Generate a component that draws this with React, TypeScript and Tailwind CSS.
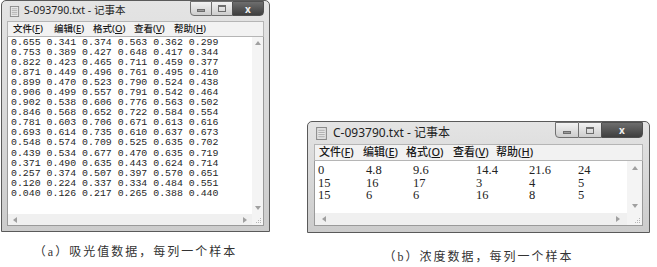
import React from "react";

const absorb = [
  "0.655 0.341 0.374 0.563 0.362 0.299",
  "0.753 0.389 0.427 0.648 0.417 0.344",
  "0.822 0.423 0.465 0.711 0.459 0.377",
  "0.871 0.449 0.496 0.761 0.495 0.410",
  "0.899 0.470 0.523 0.790 0.524 0.438",
  "0.906 0.499 0.557 0.791 0.542 0.464",
  "0.902 0.538 0.606 0.776 0.563 0.502",
  "0.846 0.568 0.652 0.722 0.584 0.554",
  "0.781 0.603 0.706 0.671 0.613 0.616",
  "0.693 0.614 0.735 0.610 0.637 0.673",
  "0.548 0.574 0.709 0.525 0.635 0.702",
  "0.439 0.534 0.677 0.470 0.635 0.719",
  "0.371 0.490 0.635 0.443 0.624 0.714",
  "0.257 0.374 0.507 0.397 0.570 0.651",
  "0.120 0.224 0.337 0.334 0.484 0.551",
  "0.040 0.126 0.217 0.265 0.388 0.440",
];

const conc = [
  ["0", "4.8", "9.6", "14.4", "21.6", "24"],
  ["15", "16", "17", "3", "4", "5"],
  ["15", "6", "6", "16", "8", "5"],
];

const menu = [
  ["文件(", "F", ")"],
  ["编辑(", "E", ")"],
  ["格式(", "O", ")"],
  ["查看(", "V", ")"],
  ["帮助(", "H", ")"],
];

const ui = { fontFamily: '"Noto Sans", "Noto Sans CJK SC", sans-serif' };

// little notepad page icon in the title bar
const FileIcon = ({ size }: { size: number }) => (
  <svg width={size} height={size} viewBox="0 0 12 12">
    <rect x="1.5" y="0.5" width="9" height="11" fill="#e8e8e8" stroke="#8a8a8a" />
    <line x1="3" y1="3" x2="9" y2="3" stroke="#b0b0b0" />
    <line x1="3" y1="5" x2="9" y2="5" stroke="#b0b0b0" />
    <line x1="3" y1="7" x2="9" y2="7" stroke="#b0b0b0" />
    <line x1="3" y1="9" x2="9" y2="9" stroke="#b0b0b0" />
  </svg>
);

const Buttons = ({ h, minW, maxW, closeW }: { h: string; minW: string; maxW: string; closeW: string }) => (
  <div className={`flex self-start ${h}`}>
    <div className={`${minW} h-full border border-[#707070] rounded-bl-[4px] bg-gradient-to-b from-[#f2f2f2] to-[#cdcdcd] flex items-center justify-center`}>
      <div className="w-[8px] h-[3px] bg-[#9a9a9a] border border-[#6d6d6d] mt-[4px]" />
    </div>
    <div className={`${maxW} h-full border-y border-[#707070] bg-gradient-to-b from-[#f2f2f2] to-[#cdcdcd] flex items-center justify-center`}>
      <div className="w-[8px] h-[7px] border border-[#6d6d6d] border-t-2" />
    </div>
    <div className={`${closeW} h-full border border-[#505050] rounded-br-[4px] bg-gradient-to-b from-[#6e6e6e] to-[#3f3f3f] flex items-center justify-center`}>
      <span className="text-[#eeeeee] text-[10px] font-bold leading-none" style={ui}>x</span>
    </div>
  </div>
);

const Menu = ({ cls, widths }: { cls: string; widths: number[] }) => (
  <div className={`flex items-center ${cls}`} style={ui}>
    {menu.map(([a, b, c], i) => (
      <span key={b} className="text-[#1a1a1a] font-medium" style={{ width: widths[i] }}>
        {a}
        <span className="underline">{b}</span>
        {c}
      </span>
    ))}
  </div>
);

const pts: Record<string, string> = {
  up: "0,5 3,1 6,5",
  down: "0,1 3,5 6,1",
  left: "5,0 1,3 5,6",
  right: "1,0 5,3 1,6",
};

const Arrow = ({ d }: { d: string }) => (
  <svg width="6" height="6" viewBox="0 0 6 6">
    <polygon points={pts[d]} fill="#a0a0a0" />
  </svg>
);

const Grip = () => (
  <svg width="7" height="7" viewBox="0 0 7 7">
    <rect x="5" y="1" width="1" height="1" fill="#b5b5b5" />
    <rect x="3" y="3" width="1" height="1" fill="#b5b5b5" />
    <rect x="5" y="3" width="1" height="1" fill="#b5b5b5" />
    <rect x="1" y="5" width="1" height="1" fill="#b5b5b5" />
    <rect x="3" y="5" width="1" height="1" fill="#b5b5b5" />
    <rect x="5" y="5" width="1" height="1" fill="#b5b5b5" />
  </svg>
);

const LeftPad = () => (
  <div className="w-[269px] h-[232px] border border-[#5a5a5a] rounded-t-[5px] bg-gradient-to-b from-[#e4e4e4] to-[#cccccc] flex flex-col px-[5px] pb-[5px]">
    <div className="h-[20px] flex items-center">
      <div className="flex items-center gap-[4px] pl-[2px] flex-1">
        <FileIcon size={11} />
        <span className="text-[10.5px] text-[#222]" style={ui}>S-093790.txt - 记事本</span>
      </div>
      <Buttons h="h-[15px]" minW="w-[22px]" maxW="w-[20px]" closeW="w-[32px]" />
    </div>
    <Menu cls="h-[16px] bg-[#f2f2f2] border border-[#b5b5b5] text-[9.5px] pl-[5px]" widths={[41, 39, 41, 40, 40]} />
    <div className="flex-1 flex bg-white border-x border-[#9a9a9a]">
      <div className="flex-1 pl-[3px] pt-[1px] text-[9.9px] leading-[10.05px] text-[#262626] whitespace-pre" style={{ fontFamily: '"Liberation Mono", monospace' }}>
        {absorb.map((r) => (
          <div key={r}>{r}</div>
        ))}
      </div>
      <div className="w-[11px] bg-[#f4f4f4] flex flex-col items-center justify-between py-[3px]">
        <Arrow d="up" />
        <Arrow d="down" />
      </div>
    </div>
    <div className="h-[12px] flex bg-white border-x border-b border-[#9a9a9a]">
      <div className="flex-1 bg-[#f0f0f0] flex items-center justify-between px-[4px]">
        <Arrow d="left" />
        <Arrow d="right" />
      </div>
      <div className="w-[11px] bg-[#f4f4f4] flex items-end justify-end p-[1px]">
        <Grip />
      </div>
    </div>
  </div>
);

const RightPad = () => (
  <div className="w-[343px] h-[112px] border border-[#5a5a5a] rounded-t-[5px] bg-gradient-to-b from-[#e4e4e4] to-[#cccccc] flex flex-col px-[6px] pb-[6px]">
    <div className="h-[22px] flex items-center">
      <div className="flex items-center gap-[5px] pl-[1px] flex-1">
        <FileIcon size={13} />
        <span className="text-[12px] text-[#222]" style={ui}>C-093790.txt - 记事本</span>
      </div>
      <Buttons h="h-[16px]" minW="w-[24px]" maxW="w-[22px]" closeW="w-[42px]" />
    </div>
    <Menu cls="h-[17px] bg-[#f2f2f2] border border-[#b5b5b5] text-[11px] pl-[4px]" widths={[44, 43, 47, 43, 45]} />
    <div className="flex-1 flex bg-white border-x border-[#9a9a9a]">
      <div className="flex-1 pl-[3px] pt-[3px] text-[12.5px] leading-[12.5px] text-[#222]" style={{ fontFamily: '"Liberation Serif", serif' }}>
        {conc.map((r, i) => (
          <div key={i} className="grid grid-cols-[48px_47px_63px_53px_49px_auto]">
            {r.map((v, j) => (
              <span key={j}>{v}</span>
            ))}
          </div>
        ))}
      </div>
      <div className="w-[15px] bg-[#f4f4f4] flex flex-col items-center justify-between py-[4px]">
        <Arrow d="up" />
        <Arrow d="down" />
      </div>
    </div>
    <div className="h-[13px] flex bg-white border-x border-b border-[#9a9a9a]">
      <div className="flex-1 bg-[#f0f0f0] flex items-center justify-between px-[6px]">
        <Arrow d="left" />
        <Arrow d="right" />
      </div>
      <div className="w-[15px] bg-[#f4f4f4] flex items-end justify-end p-[1px]">
        <Grip />
      </div>
    </div>
  </div>
);

const caption = { fontFamily: '"Liberation Serif", "Noto Sans CJK SC", serif' };

export default function App() {
  return (
    <div className="w-[657px] h-[267px] bg-white flex items-start overflow-hidden">
      <div className="flex flex-col items-center pl-[1px]">
        <LeftPad />
        <div className="mt-[11px] text-[12px] tracking-[2px] text-[#333]" style={caption}>
          （a）吸光值数据，每列一个样本
        </div>
      </div>
      <div className="flex flex-col items-center ml-[37px] pt-[121px]">
        <RightPad />
        <div className="mt-[15px] text-[12px] tracking-[2px] text-[#333]" style={caption}>
          （b）浓度数据，每列一个样本
        </div>
      </div>
    </div>
  );
}
